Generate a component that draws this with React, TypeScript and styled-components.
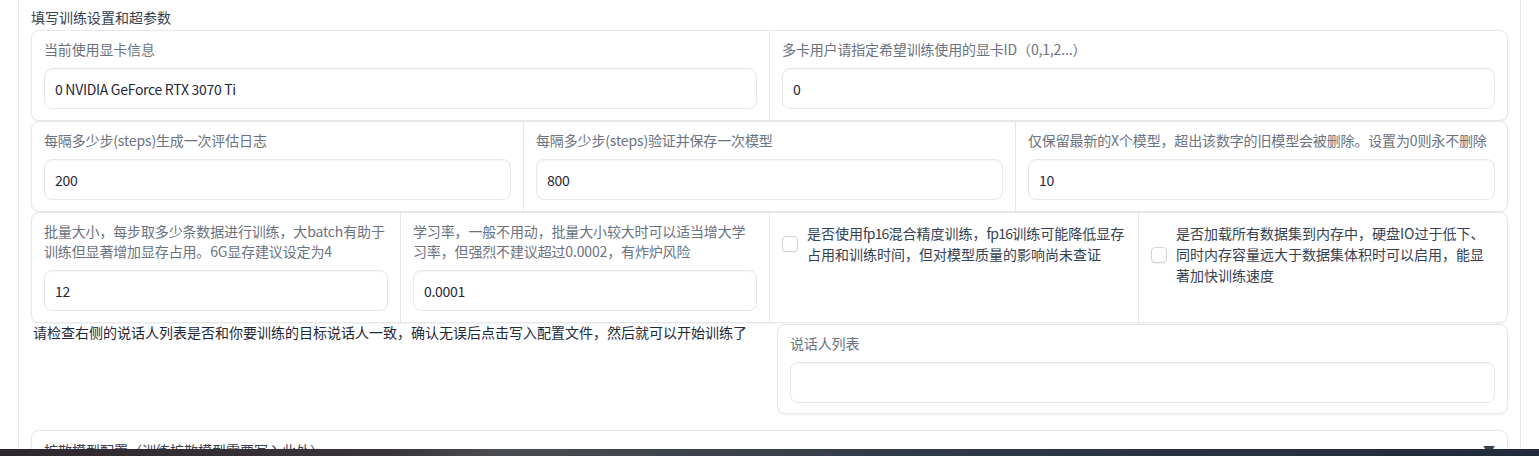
import React from 'react';
import styled, { createGlobalStyle } from 'styled-components';

const GlobalStyle = createGlobalStyle`
  html, body {
    margin: 0;
    padding: 0;
    overflow: hidden;
    background: #ffffff;
  }
  body {
    font-family: 'Noto Sans CJK SC', 'Noto Sans', sans-serif;
    font-size: 14px;
    color: #1f2937;
  }
`;

const Panel = styled.div`
  margin-left: 18px;
  width: 1503px;
  box-sizing: border-box;
  min-height: 500px;
  border-left: 1px solid #e5e7eb;
  border-right: 1px solid #e5e7eb;
  padding: 7px 12px 0 12px;
`;

const Title = styled.div`
  font-size: 14px;
  line-height: 20px;
  color: #374151;
  margin-bottom: 3px;
`;

const Form = styled.div`
  display: flex;
  flex-direction: column;
`;

const Block = styled.div`
  display: flex;
  background: #ffffff;
  border: 1px solid #e5e7eb;
  border-radius: 8px;
  box-shadow: 0 1px 2px rgba(0, 0, 0, 0.05);
  overflow: hidden;
`;

const Cell = styled.div<{ $check?: boolean }>`
  flex: 1 1 0;
  min-width: 0;
  padding: 8px 12px 11px 12px;
  display: flex;
  flex-direction: ${(p) => (p.$check ? 'row' : 'column')};
  align-items: ${(p) => (p.$check ? 'flex-start' : 'stretch')};
  & + & {
    border-left: 1px solid #e5e7eb;
  }
`;

const Label = styled.div`
  font-size: 14px;
  line-height: 20px;
  letter-spacing: -0.15px;
  color: #6b7280;
  margin-bottom: 9px;
`;

const Input = styled.div`
  height: 41px;
  box-sizing: border-box;
  border: 1px solid #e5e7eb;
  border-radius: 8px;
  background: #ffffff;
  box-shadow: inset 0 1px 2px rgba(0, 0, 0, 0.04);
  padding: 0 10px;
  display: flex;
  align-items: center;
  font-size: 14px;
  letter-spacing: -0.3px;
  color: #1f2937;
  margin-top: auto;
`;

const CheckLabel = styled.label`
  display: flex;
  align-items: center;
  gap: 9px;
  padding-top: 2px;
`;

const Box = styled.span`
  flex: 0 0 auto;
  width: 16px;
  height: 16px;
  box-sizing: border-box;
  border: 1px solid #d1d5db;
  border-radius: 4px;
  background: #ffffff;
  box-shadow: 0 1px 1px rgba(0, 0, 0, 0.06);
`;

const CheckText = styled.span`
  font-size: 14px;
  line-height: 21px;
  color: #374151;
`;

// the reference renders latin runs in a narrower face
const Latin = styled.span`
  letter-spacing: -0.8px;
`;

const SplitRow = styled.div`
  display: grid;
  grid-template-columns: 1fr 1fr;
  gap: 15px;
  margin-top: 1px;
`;

const Note = styled.div`
  padding-left: 2px;
  font-size: 14px;
  line-height: 16px;
  color: #1f2937;
`;

const SpeakerBlock = styled.div`
  display: flex;
  flex-direction: column;
  padding: 8px 12px 10px 12px;
  border: 1px solid #e5e7eb;
  border-radius: 8px;
  box-shadow: 0 1px 2px rgba(0, 0, 0, 0.05);
`;

const Accordion = styled.div`
  margin-top: 16px;
  border: 1px solid #e5e7eb;
  border-radius: 8px;
  box-shadow: 0 1px 2px rgba(0, 0, 0, 0.05);
  padding: 9px 12px;
  display: flex;
  justify-content: space-between;
  align-items: center;
  font-size: 14px;
  line-height: 20px;
  color: #374151;
`;

const Arrow = styled.span`
  font-size: 12px;
  color: #374151;
`;

const Taskbar = styled.div`
  position: fixed;
  left: 0;
  right: 0;
  bottom: 0;
  height: 7px;
  background: linear-gradient(90deg, #2c282e 0%, #38343a 25%, #4a4c52 32%, #2f3a48 60%, #1f2b3a 100%);
`;

const fields = [
  [
    { label: '当前使用显卡信息', value: '0 NVIDIA GeForce RTX 3070 Ti' },
    { label: '多卡用户请指定希望训练使用的显卡ID（0,1,2...）', value: '0' },
  ],
  [
    { label: '每隔多少步(steps)生成一次评估日志', value: '200' },
    { label: '每隔多少步(steps)验证并保存一次模型', value: '800' },
    { label: '仅保留最新的X个模型，超出该数字的旧模型会被删除。设置为0则永不删除', value: '10' },
  ],
];

const App: React.FC = () => {
  return (
    <>
      <GlobalStyle />
      <Panel>
        <Title>填写训练设置和超参数</Title>
        <Form>
          {fields.map((row, i) => (
            <Block key={i}>
              {row.map((f) => (
                <Cell key={f.label}>
                  <Label>{f.label}</Label>
                  <Input>{f.value}</Input>
                </Cell>
              ))}
            </Block>
          ))}
          <Block>
            <Cell>
              <Label>批量大小，每步取多少条数据进行训练，大batch有助于训练但显著增加显存占用。6G显存建议设定为4</Label>
              <Input>12</Input>
            </Cell>
            <Cell>
              <Label>学习率，一般不用动，批量大小较大时可以适当增大学习率，但强烈不建议超过0.0002，有炸炉风险</Label>
              <Input>0.0001</Input>
            </Cell>
            <Cell $check>
              <CheckLabel>
                <Box />
                <CheckText>
                  是否使用<Latin>fp16</Latin>混合精度训练，<Latin>fp16</Latin>训练可能降低显存占用和训练时间，但对模型质量的影响尚未查证
                </CheckText>
              </CheckLabel>
            </Cell>
            <Cell $check>
              <CheckLabel>
                <Box />
                <CheckText>是否加载所有数据集到内存中，硬盘IO过于低下、同时内存容量远大于数据集体积时可以启用，能显著加快训练速度</CheckText>
              </CheckLabel>
            </Cell>
          </Block>
        </Form>
        <SplitRow>
          <Note>请检查右侧的说话人列表是否和你要训练的目标说话人一致，确认无误后点击写入配置文件，然后就可以开始训练了</Note>
          <SpeakerBlock>
            <Label>说话人列表</Label>
            <Input />
          </SpeakerBlock>
        </SplitRow>
        <Accordion>
          <span>扩散模型配置（训练扩散模型需要写入此处）</span>
          <Arrow>▼</Arrow>
        </Accordion>
      </Panel>
      <Taskbar />
    </>
  );
};

export default App;
